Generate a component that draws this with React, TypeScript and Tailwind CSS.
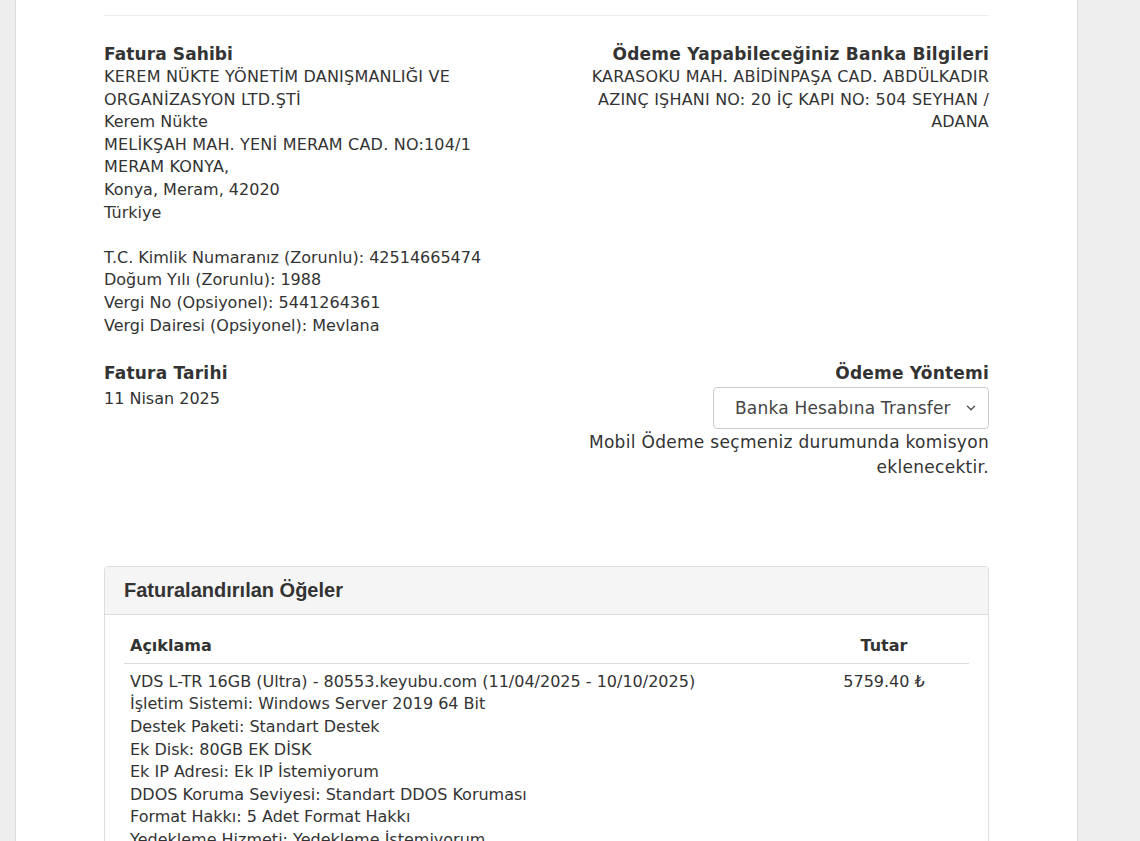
import { ChevronDown } from "lucide-react";

const OWNER = [
  "KEREM NÜKTE YÖNETİM DANIŞMANLIĞI VE ORGANİZASYON LTD.ŞTİ",
  "Kerem Nükte",
  "MELİKŞAH MAH. YENİ MERAM CAD. NO:104/1 MERAM KONYA,",
  "Konya, Meram, 42020",
  "Türkiye",
];

const IDS = [
  "T.C. Kimlik Numaranız (Zorunlu): 42514665474",
  "Doğum Yılı (Zorunlu): 1988",
  "Vergi No (Opsiyonel): 5441264361",
  "Vergi Dairesi (Opsiyonel): Mevlana",
];

const ITEM_LINES = [
  "VDS L-TR 16GB (Ultra) - 80553.keyubu.com (11/04/2025 - 10/10/2025)",
  "İşletim Sistemi: Windows Server 2019 64 Bit",
  "Destek Paketi: Standart Destek",
  "Ek Disk: 80GB EK DİSK",
  "Ek IP Adresi: Ek IP İstemiyorum",
  "DDOS Koruma Seviyesi: Standart DDOS Koruması",
  "Format Hakkı: 5 Adet Format Hakkı",
  "Yedekleme Hizmeti: Yedekleme İstemiyorum",
];

export default function App() {
  return (
    <div className="min-h-[841px] bg-[#eeeeee] font-['DejaVu_Sans',sans-serif] text-[16px] leading-[22.6px] text-[#333]">
      <div className="ml-[15px] w-[1063px] min-h-[841px] bg-white border-x border-[#dddddd] px-[88px] pt-[15px]">
        <div className="border-t border-[#eeeeee]" />

        {/* Owner / bank */}
        <div className="mt-[26px] flex justify-between">
          <div className="w-[390px]">
            <div className="font-bold text-[17px] leading-[24px] tracking-[0.1px]">Fatura Sahibi</div>
            {OWNER.map((l, i) => (
              <div key={l} className={i === 0 || i === 2 ? "tracking-[0.2px]" : ""}>{l}</div>
            ))}
            <div className="h-[22.6px]" />
            {IDS.map((l) => (
              <div key={l}>{l}</div>
            ))}
          </div>
          <div className="w-[410px] text-right">
            <div className="font-bold text-[17px] leading-[24px] tracking-[0.25px]">Ödeme Yapabileceğiniz Banka Bilgileri</div>
            <div className="tracking-[0.2px]">KARASOKU MAH. ABİDİNPAŞA CAD. ABDÜLKADIR AZINÇ IŞHANI NO: 20 İÇ KAPI NO: 504 SEYHAN / ADANA</div>
          </div>
        </div>

        {/* Date / payment */}
        <div className="mt-[24px] flex justify-between">
          <div>
            <div className="font-bold text-[17px] leading-[24px] tracking-[0.2px]">Fatura Tarihi</div>
            <div className="mt-[3px]">11 Nisan 2025</div>
          </div>
          <div className="flex w-[410px] flex-col items-end text-right">
            <div className="font-bold text-[17px] leading-[24px] tracking-[0.2px]">Ödeme Yöntemi</div>
            <div className="mt-[2px] flex h-[42px] w-[276px] items-center justify-between rounded-[4px] border border-[#cccccc] pl-[21px] pr-[10px] text-[17px] tracking-[0.2px] text-[#444]">
              <span>Banka Hesabına Transfer</span>
              <ChevronDown size={14} strokeWidth={2.5} className="text-[#555]" />
            </div>
            <div className="mt-[1px] text-[17px] leading-[25px] tracking-[0.3px]">Mobil Ödeme seçmeniz durumunda komisyon eklenecektir.</div>
          </div>
        </div>

        {/* Items panel */}
        <div className="mt-[86px] rounded-[4px] border border-[#dddddd]">
          <div className="h-[48px] flex items-center rounded-t-[4px] border-b border-[#dddddd] bg-[#f5f5f5] px-[19px] font-['Liberation_Sans',sans-serif] text-[20px] font-bold text-[#333]">
            Faturalandırılan Öğeler
          </div>
          <div className="px-[19px] pt-[20px]">
            <div className="flex border-b border-[#dddddd] pb-[5px] font-bold">
              <div className="flex-1 pl-[6px]">Açıklama</div>
              <div className="w-[170px] text-center">Tutar</div>
            </div>
            <div className="flex pt-[7px]">
              <div className="flex-1 pl-[6px]">
                {ITEM_LINES.map((l) => (
                  <div key={l}>{l}</div>
                ))}
              </div>
              <div className="w-[170px] text-center">5759.40 ₺</div>
            </div>
          </div>
        </div>
      </div>
    </div>
  );
}
